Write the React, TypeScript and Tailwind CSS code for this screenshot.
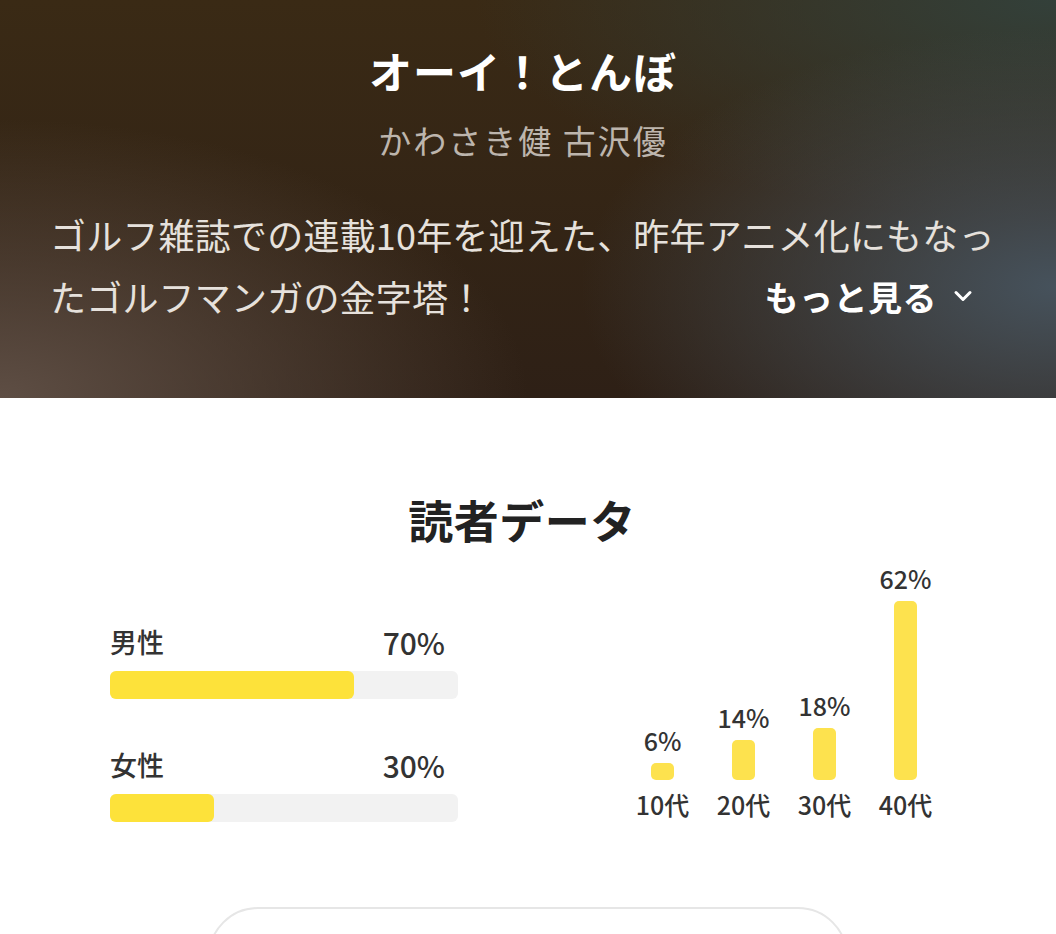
import { ChevronDown } from "lucide-react";

const gender = [
  { label: "男性", value: 70 },
  { label: "女性", value: 30 },
];

const ages = [
  { label: "10代", value: 6 },
  { label: "20代", value: 14 },
  { label: "30代", value: 18 },
  { label: "40代", value: 62 },
];

const font = "font-['Noto_Sans_CJK_JP','Noto_Sans',sans-serif]";

export default function App() {
  return (
    <div className={`h-[934px] w-[1056px] overflow-hidden bg-white ${font}`}>
      <header className="h-[398px] bg-[image:radial-gradient(ellipse_45%_65%_at_100%_72%,#46525c_0%,transparent_100%),radial-gradient(ellipse_50%_70%_at_0%_100%,#5e4e44_0%,transparent_100%),radial-gradient(ellipse_55%_55%_at_100%_0%,#33403a_0%,transparent_100%),linear-gradient(180deg,#3a2a15_0%,#2e2016_100%)] px-[50px] pt-[45px]">
        <div className="pr-[10px]">
          <h1 className="text-center text-[43px] leading-[50px] font-bold tracking-[1px] text-white">オーイ！とんぼ</h1>
          <p className="mt-[25px] text-center text-[33px] leading-[40px] tracking-[2px] text-[#bdb5ad]">かわさき健 古沢優</p>
        </div>
        <div className="relative mt-[43px]">
          <p className="text-[36px] leading-[62px] tracking-[0.2px] text-[#e6e1dc]">
            ゴルフ雑誌での連載10年を迎えた、昨年アニメ化にもなったゴルフマンガの金字塔！
          </p>
          <button
            className="absolute right-[29px] bottom-0 flex h-[62px] items-center gap-[12px] text-[34px] font-bold tracking-[0.5px] text-white"
            type="button"
          >
            もっと見る
            <ChevronDown className="h-[28px] w-[28px]" strokeWidth={2.6} />
          </button>
        </div>
      </header>

      <section className="pt-[94px]">
        <h2 className="pr-[12px] text-center text-[45px] leading-[56px] font-bold tracking-[0.5px] text-[#222]">読者データ</h2>

        <div className="mt-[16px] flex items-start justify-between px-[110px]">
          <div className="mt-[60px] flex w-[348px] flex-col">
            {gender.map((item, i) => (
              <div className={i > 0 ? "mt-[48px]" : ""} key={item.label}>
                <div className="flex h-[36px] items-center justify-between pr-[13px] text-[#333]">
                  <span className="text-[27px] font-medium">{item.label}</span>
                  <span className="text-[30px] font-medium">{item.value}%</span>
                </div>
                <div className="mt-[11px] h-[28px] rounded-[6px] bg-[#f2f2f2]">
                  <div className="h-full rounded-[6px] bg-[#fde23a]" style={{ width: `${item.value}%` }} />
                </div>
              </div>
            ))}
          </div>

          <div className="flex h-[254px] items-end">
            {ages.map((item) => (
              <div className="flex w-[81px] flex-col items-center text-[#333]" key={item.label}>
                <span className="text-[25px] leading-[28px] font-medium">{item.value}%</span>
                <div
                  className="mt-[9px] w-[23px] rounded-[5px] bg-[#fde24e]"
                  style={{ height: `${item.value * 2.89}px` }}
                />
                <span className="mt-[10px] text-[25px] leading-[28px] font-medium">{item.label}</span>
              </div>
            ))}
          </div>
        </div>

        <div className="mt-[85px] flex justify-center">
          <button className="h-[100px] w-[640px] rounded-full border-2 border-[#e6e6e6] bg-white" type="button" />
        </div>
      </section>
    </div>
  );
}
